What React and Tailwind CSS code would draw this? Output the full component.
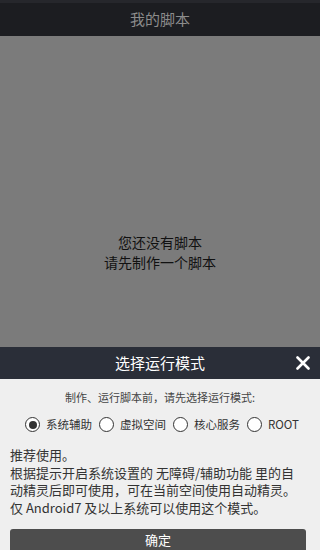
import React from "react";

const font = { fontFamily: '"Noto Sans CJK SC", "Noto Sans", sans-serif' };

function Radio({ checked, label }) {
  return (
    <div className="flex items-center">
      <span className="w-[15px] h-[15px] rounded-full border-[1.5px] border-[#333] flex items-center justify-center bg-white">
        {checked && <span className="w-[8px] h-[8px] rounded-full bg-[#333]" />}
      </span>
      <span className="ml-[6px] text-[11.5px] text-[#333] leading-none">{label}</span>
    </div>
  );
}

export default function App() {
  return (
    <div className="w-[320px] h-[550px] flex flex-col overflow-hidden" style={font}>
      <div className="flex-none h-[36px] bg-[#1c1d21] flex items-center justify-center border-t-[3px] border-[#26272c]">
        <span className="text-[15px] text-[#8c8c8c]">我的脚本</span>
      </div>
      <div className="flex-none h-[311px] bg-[#7b7b7b] flex flex-col items-center pt-[196px]">
        <p className="text-[14px] leading-[20px] text-[#111]">您还没有脚本</p>
        <p className="text-[14px] leading-[20px] text-[#111]">请先制作一个脚本</p>
      </div>
      <div className="flex-none h-[32px] bg-[#2a2e38] relative flex items-center justify-center">
        <span className="text-[15px] text-white">选择运行模式</span>
        <svg className="absolute right-[10px] top-[9px]" width="14" height="14" viewBox="0 0 14 14">
          <path d="M1.5 1.5 L12.5 12.5 M12.5 1.5 L1.5 12.5" stroke="#fff" strokeWidth="2.6" strokeLinecap="round" />
        </svg>
      </div>
      <div className="flex-none h-[171px] overflow-hidden bg-[#efefef] px-[10px] pt-[10px]">
        <p className="text-center text-[11px] leading-[16px] text-[#444]">制作、运行脚本前，请先选择运行模式:</p>
        <div className="flex items-center justify-center gap-[7px] mt-[12px] pl-[4px]">
          <Radio checked label="系统辅助" />
          <Radio label="虚拟空间" />
          <Radio label="核心服务" />
          <Radio label="ROOT" />
        </div>
        <div className="mt-[14px] text-[13px] leading-[17.5px] text-[#333] whitespace-nowrap">
          <p>推荐使用。</p>
          <p>
            根据提示开启系统设置的 无障碍/辅助功能 里的自
            <br />
            动精灵后即可使用，可在当前空间使用自动精灵。
          </p>
          <p>仅 Android7 及以上系统可以使用这个模式。</p>
        </div>
        <button className="mt-[13px] w-[296px] h-[36px] rounded-[3px] bg-[#4d4d4d] text-white text-[13px] leading-[16px] flex items-start justify-center pt-[3px]">
          确定
        </button>
      </div>
    </div>
  );
}
